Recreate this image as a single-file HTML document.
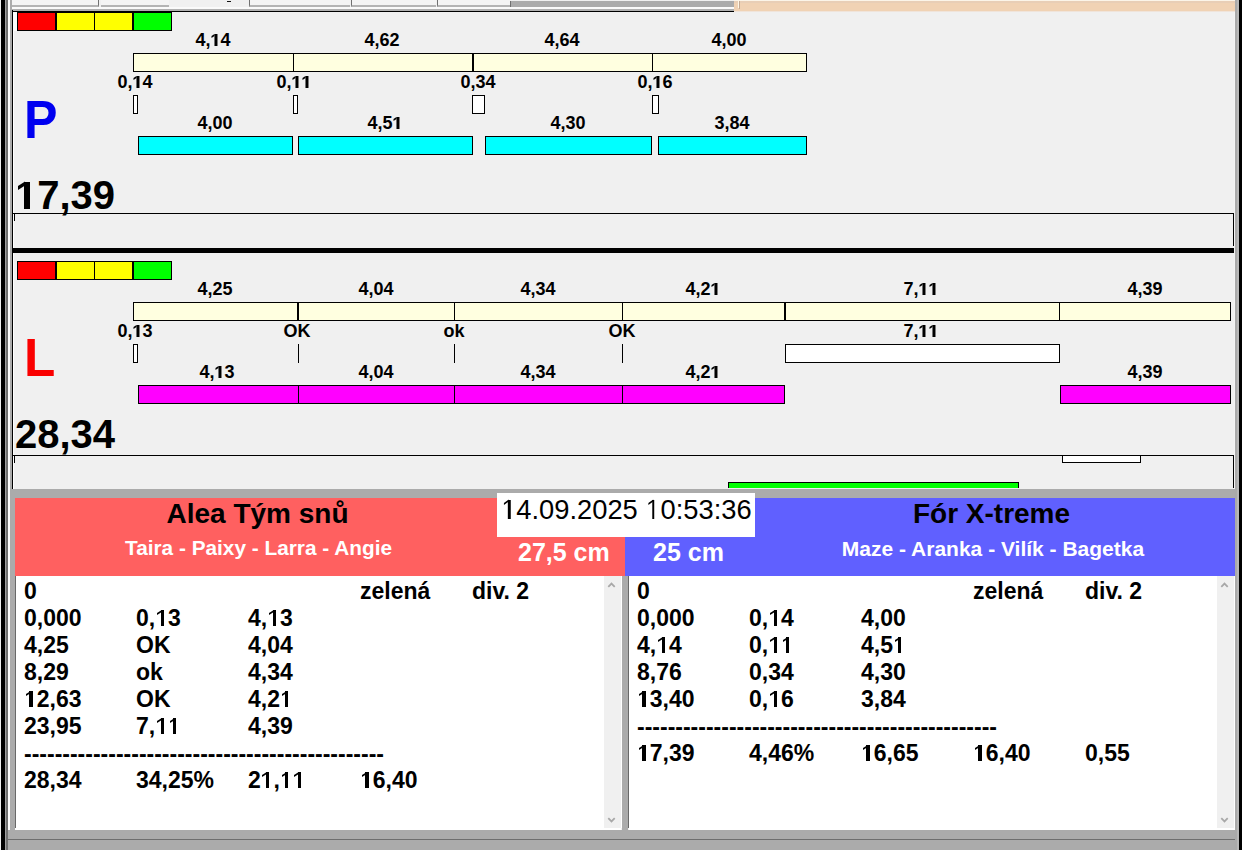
<!DOCTYPE html>
<html><head><meta charset="utf-8">
<style>
html,body{margin:0;padding:0;}
body{width:1242px;height:850px;overflow:hidden;position:relative;background:#f0f0f0;font-family:"Liberation Sans",sans-serif;}
div{position:absolute;box-sizing:border-box;}
.t{position:absolute;white-space:pre;line-height:1;font-weight:bold;color:#000;}
.c{transform:translateX(-50%);}
.lb{font-size:18px;}
.cr{background:#ffffe0;border:1px solid #000;}
.tk{background:#fff;border:1px solid #000;}
.cy{background:#00ffff;border:1px solid #000;}
.mg{background:#ff00ff;border:1px solid #000;}
.vl{background:#000;width:1px;}
.tb{font-size:23px;}
.o,.or{position:relative;color:transparent;}
.o::before,.or::before,.o::after,.or::after{content:"";position:absolute;background:#000;}
.o::before{left:0.2334em;top:0.2173em;width:0.1372em;height:0.688em;}
.o::after{left:0.0684em;top:0.3288em;width:0.1724em;height:0.1079em;transform:skewY(-33deg);transform-origin:0 0;}
.or::before{left:0.2515em;top:0.2173em;width:0.0884em;height:0.688em;}
.or::after{left:0.0962em;top:0.3288em;width:0.1626em;height:0.083em;transform:skewY(-35deg);transform-origin:0 0;}
</style></head><body>
<!-- top strip -->
<div style="left:0;top:0;width:1242px;height:12px;background:#f0f0f0"></div>
<div style="left:11px;top:0;width:88px;height:7px;background:#f4f4f4;border-bottom:2px solid #b4b4b4;border-right:1px solid #707070"></div>
<div style="left:101px;top:0;width:68px;height:7px;background:#f4f4f4;border-bottom:2px solid #b4b4b4"></div>
<div style="left:249px;top:0;width:101px;height:7px;background:#f4f4f4;border-bottom:2px solid #b4b4b4;border-left:1px solid #707070"></div>
<div style="left:351px;top:0;width:85px;height:7px;background:#f4f4f4;border-bottom:2px solid #b4b4b4;border-left:1px solid #707070"></div>
<div style="left:437px;top:0;width:73px;height:7px;background:#f4f4f4;border-bottom:2px solid #b4b4b4;border-left:1px solid #707070"></div>
<div style="left:510px;top:1px;width:224px;height:6px;background:#ababab;border-left:1px solid #707070"></div>
<div style="left:227px;top:1px;width:4px;height:1px;background:#111"></div>
<div style="left:12px;top:7px;width:722px;height:2px;background:#fafafa"></div>
<div style="left:12px;top:9px;width:722px;height:2px;background:#b0b0b0"></div>
<div style="left:12px;top:11px;width:722px;height:1px;background:#000"></div>
<div style="left:734px;top:0;width:501px;height:11px;background:#f0d2b4"></div>
<div style="left:734px;top:0;width:501px;height:1px;background:#fbf4e8"></div>
<div style="left:734px;top:1px;width:501px;height:2px;background:#e8ceb6"></div>
<div style="left:734px;top:11px;width:501px;height:1px;background:#f0e4da"></div>
<div style="left:738px;top:0;width:1px;height:8px;background:#fff6e6"></div>
<div style="left:739px;top:1px;width:1px;height:8px;background:#c4aa94"></div>

<!-- left / right frame -->
<div style="left:1px;top:0;width:4px;height:850px;background:#000"></div>
<div style="left:5px;top:0;width:1px;height:850px;background:#a0a0a0"></div>
<div style="left:6px;top:0;width:2px;height:850px;background:#707070"></div>
<div style="left:8px;top:0;width:2px;height:839px;background:#fff"></div>
<div style="left:10px;top:0;width:2px;height:850px;background:#ababab"></div>
<div style="left:13px;top:12px;width:1px;height:236px;background:#fff"></div>
<div style="left:13px;top:253px;width:1px;height:236px;background:#fff"></div>
<div style="left:1234px;top:12px;width:1px;height:477px;background:#f4f4f4"></div>
<div style="left:1235px;top:0;width:2px;height:850px;background:#aaaaaa"></div>
<div style="left:1237px;top:0;width:2px;height:850px;background:#b8b8b8"></div>
<div style="left:1239px;top:0;width:3px;height:850px;background:#000"></div>

<!-- PANEL P -->
<div style="left:12px;top:10px;width:1px;height:238px;background:#000"></div>
<div style="left:13px;top:12px;width:4px;height:19px;background:#fcfcfc"></div>
<div style="left:17px;top:12px;width:155px;height:19px;background:#000"></div>
<div style="left:18px;top:13px;width:37px;height:17px;background:#ff0000"></div>
<div style="left:57px;top:13px;width:37px;height:17px;background:#ffff00"></div>
<div style="left:95px;top:13px;width:37px;height:17px;background:#ffff00"></div>
<div style="left:134px;top:13px;width:37px;height:17px;background:#00ff00"></div>

<div class="t lb c" style="left:213px;top:31px">4,<span class="o">1</span>4</div>
<div class="t lb c" style="left:382px;top:31px">4,62</div>
<div class="t lb c" style="left:562px;top:31px">4,64</div>
<div class="t lb c" style="left:729px;top:31px">4,00</div>

<div class="cr" style="left:133px;top:53px;width:674px;height:19px"></div>
<div class="vl" style="left:293px;top:53px;height:19px"></div>
<div class="vl" style="left:472px;top:53px;height:19px;width:2px"></div>
<div class="vl" style="left:652px;top:53px;height:19px"></div>

<div class="t lb c" style="left:135px;top:73px">0,<span class="o">1</span>4</div>
<div class="t lb c" style="left:294px;top:73px">0,<span class="o">1</span><span class="o">1</span></div>
<div class="t lb c" style="left:478px;top:73px">0,34</div>
<div class="t lb c" style="left:655px;top:73px">0,<span class="o">1</span>6</div>

<div class="tk" style="left:133px;top:95px;width:5px;height:19px"></div>
<div class="tk" style="left:293px;top:95px;width:5px;height:19px"></div>
<div class="tk" style="left:472px;top:95px;width:13px;height:19px"></div>
<div class="tk" style="left:652px;top:95px;width:7px;height:19px"></div>

<div class="t lb c" style="left:215px;top:114px">4,00</div>
<div class="t lb c" style="left:385px;top:114px">4,5<span class="o">1</span></div>
<div class="t lb c" style="left:568px;top:114px">4,30</div>
<div class="t lb c" style="left:732px;top:114px">3,84</div>

<div class="cy" style="left:138px;top:136px;width:155px;height:19px"></div>
<div class="cy" style="left:298px;top:136px;width:175px;height:19px"></div>
<div class="cy" style="left:485px;top:136px;width:167px;height:19px"></div>
<div class="cy" style="left:658px;top:136px;width:149px;height:19px"></div>

<div class="t" style="left:23.5px;top:92.3px;font-size:54px;color:#0000f0;transform:scaleX(0.93);transform-origin:0 0">P</div>
<div class="t" style="left:15px;top:175px;font-size:40px"><span class="o">1</span>7,39</div>

<div style="left:12px;top:213px;width:1222px;height:1px;background:#000"></div>
<div style="left:1233px;top:213px;width:1px;height:33px;background:#000"></div>
<div style="left:14px;top:214px;width:1px;height:7px;background:#000"></div>
<div style="left:12px;top:248px;width:1222px;height:5px;background:#000"></div>

<!-- PANEL L -->
<div style="left:12px;top:253px;width:1px;height:236px;background:#000"></div>
<div style="left:17px;top:261px;width:155px;height:19px;background:#000"></div>
<div style="left:18px;top:262px;width:37px;height:17px;background:#ff0000"></div>
<div style="left:57px;top:262px;width:37px;height:17px;background:#ffff00"></div>
<div style="left:95px;top:262px;width:37px;height:17px;background:#ffff00"></div>
<div style="left:134px;top:262px;width:37px;height:17px;background:#00ff00"></div>

<div class="t lb c" style="left:215px;top:280px">4,25</div>
<div class="t lb c" style="left:376px;top:280px">4,04</div>
<div class="t lb c" style="left:538px;top:280px">4,34</div>
<div class="t lb c" style="left:703px;top:280px">4,2<span class="o">1</span></div>
<div class="t lb c" style="left:921px;top:280px">7,<span class="o">1</span><span class="o">1</span></div>
<div class="t lb c" style="left:1145px;top:280px">4,39</div>

<div class="cr" style="left:133px;top:302px;width:1098px;height:19px"></div>
<div class="vl" style="left:297px;top:302px;height:19px;width:2px"></div>
<div class="vl" style="left:454px;top:302px;height:19px"></div>
<div class="vl" style="left:622px;top:302px;height:19px"></div>
<div class="vl" style="left:784px;top:302px;height:19px;width:2px"></div>
<div class="vl" style="left:1059px;top:302px;height:19px"></div>

<div class="t lb c" style="left:135px;top:322px">0,<span class="o">1</span>3</div>
<div class="t lb c" style="left:297px;top:322px">OK</div>
<div class="t lb c" style="left:454px;top:322px">ok</div>
<div class="t lb c" style="left:622px;top:322px">OK</div>
<div class="t lb c" style="left:921px;top:322px">7,<span class="o">1</span><span class="o">1</span></div>

<div class="tk" style="left:133px;top:344px;width:5px;height:19px"></div>
<div class="vl" style="left:298px;top:344px;height:19px"></div>
<div class="vl" style="left:454px;top:344px;height:19px"></div>
<div class="vl" style="left:622px;top:344px;height:19px"></div>
<div class="tk" style="left:785px;top:344px;width:275px;height:19px"></div>

<div class="t lb c" style="left:217px;top:363px">4,<span class="o">1</span>3</div>
<div class="t lb c" style="left:376px;top:363px">4,04</div>
<div class="t lb c" style="left:538px;top:363px">4,34</div>
<div class="t lb c" style="left:703px;top:363px">4,2<span class="o">1</span></div>
<div class="t lb c" style="left:1145px;top:363px">4,39</div>

<div class="mg" style="left:138px;top:385px;width:647px;height:19px"></div>
<div class="vl" style="left:298px;top:385px;height:19px"></div>
<div class="vl" style="left:454px;top:385px;height:19px"></div>
<div class="vl" style="left:622px;top:385px;height:19px"></div>
<div class="mg" style="left:1060px;top:385px;width:171px;height:19px"></div>

<div class="t" style="left:23.5px;top:330.6px;font-size:53px;color:#fa0000;transform:scaleX(0.967);transform-origin:0 0">L</div>
<div class="t" style="left:15px;top:414px;font-size:40px">28,34</div>

<div style="left:12px;top:455px;width:1222px;height:1px;background:#000"></div>
<div style="left:1233px;top:455px;width:1px;height:33px;background:#000"></div>
<div style="left:14px;top:456px;width:1px;height:7px;background:#000"></div>
<div class="tk" style="left:1062px;top:455px;width:79px;height:8px"></div>
<div style="left:728px;top:482px;width:291px;height:6px;background:#00ff00;border:1px solid #000;border-bottom:none"></div>

<!-- grey band -->
<div style="left:10px;top:489px;width:1225px;height:9px;background:#ababab"></div>
<div style="left:10px;top:489px;width:5px;height:341px;background:#ababab"></div>

<!-- headers -->
<div style="left:15px;top:498px;width:610px;height:78px;background:#ff6060"></div>
<div style="left:625px;top:498px;width:610px;height:78px;background:#6060ff"></div>
<div style="left:497px;top:493px;width:258px;height:44px;background:#fff"></div>
<div class="t" style="left:501px;top:495.5px;font-size:28px;font-weight:normal;transform:scaleX(0.976);transform-origin:0 0"><span class="or">1</span>4.09.2025 <span class="or">1</span>0:53:36</div>

<div class="t c" style="left:257.5px;top:500px;font-size:28px">Alea Tým snů</div>
<div class="t c" style="left:258.5px;top:538px;font-size:20.8px;color:#fff">Taira - Paixy - Larra - Angie</div>
<div class="t" style="left:518px;top:540px;font-size:25px;color:#fff">27,5 cm</div>
<div class="t" style="left:653px;top:540px;font-size:25px;color:#fff">25 cm</div>
<div class="t c" style="left:991.5px;top:499.5px;font-size:28px">Fór X-treme</div>
<div class="t c" style="left:993px;top:538px;font-size:21px;color:#fff">Maze - Aranka - Vilík - Bagetka</div>

<!-- tables -->
<div style="left:15px;top:576px;width:1px;height:252px;background:#696969"></div>
<div style="left:16px;top:576px;width:588px;height:252px;background:#fff"></div>
<div style="left:604px;top:576px;width:17px;height:252px;background:#f0f0f0"></div>
<div style="left:621px;top:576px;width:1px;height:252px;background:#fff"></div>
<div style="left:622px;top:576px;width:6px;height:254px;background:#ababab"></div>
<div style="left:628px;top:576px;width:1px;height:252px;background:#696969"></div>
<div style="left:629px;top:576px;width:588px;height:252px;background:#fff"></div>
<div style="left:1217px;top:576px;width:17px;height:252px;background:#f0f0f0"></div>
<div style="left:1234px;top:576px;width:1px;height:252px;background:#fff"></div>
<div style="left:15px;top:828px;width:606px;height:2px;background:#fff"></div>
<div style="left:629px;top:828px;width:606px;height:2px;background:#fff"></div>
<div style="left:8px;top:830px;width:1227px;height:20px;background:#ababab"></div>
<div style="left:8px;top:839px;width:1227px;height:1px;background:#6e6e6e"></div>
<svg style="position:absolute;left:604px;top:578px" width="17" height="12"><path d="M4.3 8.8 L7.5 5.6 L10.7 8.8" fill="none" stroke="#a8a8a8" stroke-width="1.8"/></svg>
<svg style="position:absolute;left:604px;top:812px" width="17" height="12"><path d="M4.3 6.2 L7.5 9.4 L10.7 6.2" fill="none" stroke="#a8a8a8" stroke-width="1.8"/></svg>
<svg style="position:absolute;left:1217px;top:578px" width="17" height="12"><path d="M4.3 8.8 L7.5 5.6 L10.7 8.8" fill="none" stroke="#a8a8a8" stroke-width="1.8"/></svg>
<svg style="position:absolute;left:1217px;top:812px" width="17" height="12"><path d="M4.3 6.2 L7.5 9.4 L10.7 6.2" fill="none" stroke="#a8a8a8" stroke-width="1.8"/></svg>

<!-- table text -->
<div class="t tb" style="left:24px;top:580px">0</div>
<div class="t tb" style="left:360px;top:580px">zelená</div>
<div class="t tb" style="left:472px;top:580px">div. 2</div>
<div class="t tb" style="left:24px;top:607px">0,000</div>
<div class="t tb" style="left:136px;top:607px">0,<span class="o">1</span>3</div>
<div class="t tb" style="left:248px;top:607px">4,<span class="o">1</span>3</div>
<div class="t tb" style="left:24px;top:634px">4,25</div>
<div class="t tb" style="left:136px;top:634px">OK</div>
<div class="t tb" style="left:248px;top:634px">4,04</div>
<div class="t tb" style="left:24px;top:661px">8,29</div>
<div class="t tb" style="left:136px;top:661px">ok</div>
<div class="t tb" style="left:248px;top:661px">4,34</div>
<div class="t tb" style="left:24px;top:688px"><span class="o">1</span>2,63</div>
<div class="t tb" style="left:136px;top:688px">OK</div>
<div class="t tb" style="left:248px;top:688px">4,2<span class="o">1</span></div>
<div class="t tb" style="left:24px;top:715px">23,95</div>
<div class="t tb" style="left:136px;top:715px">7,<span class="o">1</span><span class="o">1</span></div>
<div class="t tb" style="left:248px;top:715px">4,39</div>
<div class="t tb" style="left:24px;top:743px">-----------------------------------------------</div>
<div class="t tb" style="left:24px;top:769px">28,34</div>
<div class="t tb" style="left:136px;top:769px">34,25%</div>
<div class="t tb" style="left:248px;top:769px">2<span class="o">1</span>,<span class="o">1</span><span class="o">1</span></div>
<div class="t tb" style="left:360px;top:769px"><span class="o">1</span>6,40</div>
<div class="t tb" style="left:637px;top:580px">0</div>
<div class="t tb" style="left:973px;top:580px">zelená</div>
<div class="t tb" style="left:1085px;top:580px">div. 2</div>
<div class="t tb" style="left:637px;top:607px">0,000</div>
<div class="t tb" style="left:749px;top:607px">0,<span class="o">1</span>4</div>
<div class="t tb" style="left:861px;top:607px">4,00</div>
<div class="t tb" style="left:637px;top:634px">4,<span class="o">1</span>4</div>
<div class="t tb" style="left:749px;top:634px">0,<span class="o">1</span><span class="o">1</span></div>
<div class="t tb" style="left:861px;top:634px">4,5<span class="o">1</span></div>
<div class="t tb" style="left:637px;top:661px">8,76</div>
<div class="t tb" style="left:749px;top:661px">0,34</div>
<div class="t tb" style="left:861px;top:661px">4,30</div>
<div class="t tb" style="left:637px;top:688px"><span class="o">1</span>3,40</div>
<div class="t tb" style="left:749px;top:688px">0,<span class="o">1</span>6</div>
<div class="t tb" style="left:861px;top:688px">3,84</div>
<div class="t tb" style="left:637px;top:716px">-----------------------------------------------</div>
<div class="t tb" style="left:637px;top:742px"><span class="o">1</span>7,39</div>
<div class="t tb" style="left:749px;top:742px">4,46%</div>
<div class="t tb" style="left:861px;top:742px"><span class="o">1</span>6,65</div>
<div class="t tb" style="left:973px;top:742px"><span class="o">1</span>6,40</div>
<div class="t tb" style="left:1085px;top:742px">0,55</div>
</body></html>
